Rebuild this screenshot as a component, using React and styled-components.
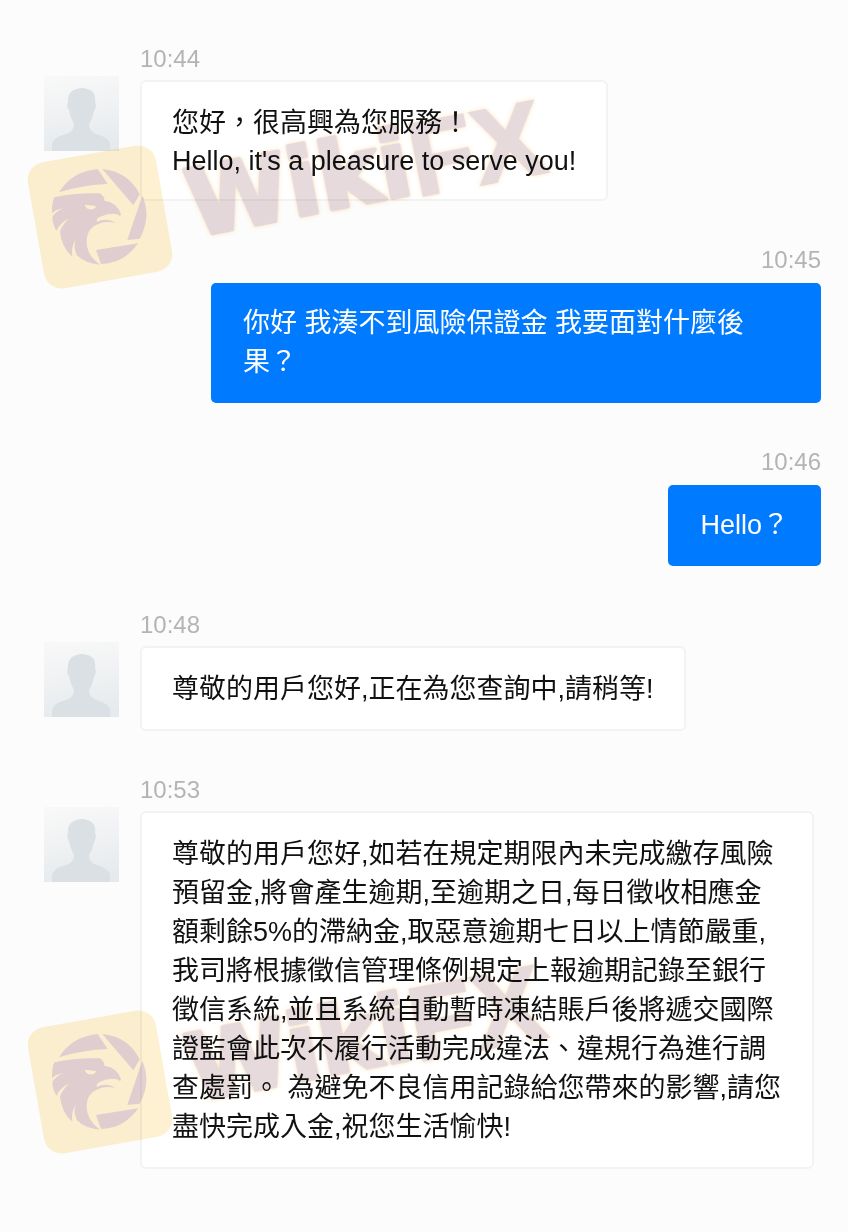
import React from "react";
import styled, { createGlobalStyle } from "styled-components";

const GlobalStyle = createGlobalStyle`
  * {
    box-sizing: border-box;
  }
  body {
    margin: 0;
    background: #fcfcfc;
    font-family: "Liberation Sans", "Noto Sans CJK TC", sans-serif;
  }
`;

const Page = styled.main`
  position: relative;
  min-height: 100vh;
  padding: 44px 27px 64px 44px;
`;

const Thread = styled.ol`
  display: flex;
  flex-direction: column;
  gap: 44px;
  margin: 0;
  padding: 0;
  list-style: none;
`;

const Row = styled.li`
  display: flex;
  align-items: flex-start;
  gap: 21px;
  justify-content: ${({ $mine }) => ($mine ? "flex-end" : "flex-start")};
  padding-left: ${({ $mine }) => ($mine ? "167px" : "0")};
  padding-right: ${({ $mine }) => ($mine ? "0" : "7px")};
`;

const Avatar = styled.svg`
  flex: none;
  width: 75px;
  height: 75px;
  margin-top: 32px;
`;

const Content = styled.div`
  display: flex;
  flex-direction: column;
  align-items: ${({ $mine }) => ($mine ? "flex-end" : "flex-start")};
  gap: ${({ $mine }) => ($mine ? "8px" : "6px")};
  min-width: 0;
`;

const Time = styled.time`
  font-size: 24px;
  line-height: 30px;
  color: #b4b4b4;
`;

const Bubble = styled.div`
  padding: 22px 30px 20px;
  border: 2px solid #f3f3f3;
  border-radius: 6px;
  background: #fff;
  color: #111;
`;

const MyBubble = styled(Bubble)`
  padding: 21px 32px;
  border: 0;
  border-radius: 5px;
  background: #007aff;
  color: #fff;
`;

const Line = styled.p`
  margin: 0;
  font-size: 27px;
  line-height: ${({ lang }) => (lang === "en" ? "36px" : "39px")};
`;

const Mark = styled.svg`
  position: absolute;
  left: 0;
  top: ${({ $top }) => $top};
  width: 600px;
  height: 240px;
  overflow: visible;
  pointer-events: none;
  mix-blend-mode: multiply;
`;

const Wordmark = styled.g`
  fill: #e6dadc;
  stroke: #e6dadc;
  filter: drop-shadow(0 0 2px #ffe6bd);
`;

const Rounded = styled.text`
  font: 700 92px "DejaVu Sans", sans-serif;
  stroke-width: 4px;
  stroke-linejoin: round;
`;

const Sharp = styled.text`
  font: 700 106px "Liberation Sans", sans-serif;
  stroke-width: 2px;
`;

const messages = [
  {
    time: "10:44",
    lines: [
      { text: "您好，很高興為您服務！" },
      { text: "Hello, it's a pleasure to serve you!", lang: "en" },
    ],
  },
  {
    time: "10:45",
    mine: true,
    lines: [{ text: "你好 我湊不到風險保證金 我要面對什麼後果？" }],
  },
  { time: "10:46", mine: true, lines: [{ text: "Hello？" }] },
  { time: "10:48", lines: [{ text: "尊敬的用戶您好,正在為您查詢中,請稍等!" }] },
  {
    time: "10:53",
    lines: [
      {
        text: "尊敬的用戶您好,如若在規定期限內未完成繳存風險預留金,將會產生逾期,至逾期之日,每日徵收相應金額剩餘5%的滯納金,取惡意逾期七日以上情節嚴重,我司將根據徵信管理條例規定上報逾期記錄至銀行徵信系統,並且系統自動暫時凍結賬戶後將遞交國際證監會此次不履行活動完成違法、違規行為進行調查處罰。 為避免不良信用記錄給您帶來的影響,請您盡快完成入金,祝您生活愉快!",
      },
    ],
  },
];

const AgentAvatar = () => (
  <Avatar viewBox="0 0 75 75" role="img" aria-label="客服">
    <defs>
      <linearGradient id="avatarBg" x1="0.3" y1="0" x2="0.5" y2="1">
        <stop offset="0" stopColor="#f8f8f8" />
        <stop offset="1" stopColor="#e6eaed" />
      </linearGradient>
    </defs>
    <rect width="75" height="75" fill="url(#avatarBg)" />
    <path
      d="M8 75V68Q10 62 16 60L25 57Q30 54 30 48Q26 41 25 34Q22 30 24 26Q23 13 38 12Q53 13 51 26Q53 30 50 35Q49 42 45 48Q45 54 50 57L58 60Q65 63 66 68V75Z"
      fill="#dae0e3"
    />
  </Avatar>
);

const Watermark = ({ top }) => (
  <Mark $top={top} viewBox="0 0 600 240" aria-hidden="true">
    <rect
      x="35"
      y="63"
      width="130"
      height="128"
      rx="18"
      fill="#fdf1d2"
      transform="rotate(-10 100 127)"
    />
    {/* eagle head inside the shutter ring */}
    <g fill="#e2d0d2" transform="translate(45 70) scale(0.3333)">
      <path d="M42 97Q80 35 158 27L188 72Q115 74 42 97Z" />
      <path d="M172 27Q250 35 284 103L265 136Z" />
      <path d="M292 107Q320 170 284 236L247 240Z" />
      <path d="M280 250Q235 312 168 312L153 270Z" />
      <path d="M28 112Q90 98 165 100Q180 112 178 122Q218 128 228 163Q226 172 220 164Q195 156 164 171Q152 177 156 185Q185 172 212 188Q178 182 160 192Q125 205 125 245Q125 285 165 314Q120 310 96 286Q84 262 92 240Q78 258 82 290Q50 262 45 215Q50 198 72 175Q45 190 34 212Q22 190 22 172Q30 155 55 145Q32 148 21 160Q20 130 28 112Z" />
      <path d="M119 134L153 138Q150 150 135 148Q122 146 119 134Z" fill="#fdf1d2" />
    </g>
    <Wordmark transform="translate(198 146) rotate(-11)">
      <Rounded x="-4" y="0">
        Wiki
      </Rounded>
      <Sharp x="222" y="4">
        FX
      </Sharp>
    </Wordmark>
  </Mark>
);

const Message = ({ time, mine, lines }) => {
  const Box = mine ? MyBubble : Bubble;
  return (
    <Row $mine={mine}>
      {!mine && <AgentAvatar />}
      <Content $mine={mine}>
        <Time>{time}</Time>
        <Box>
          {lines.map(({ text, lang }) => (
            <Line key={text} lang={lang || "zh-Hant"}>
              {text}
            </Line>
          ))}
        </Box>
      </Content>
    </Row>
  );
};

const App = () => {
  return (
    <>
      <GlobalStyle />
      <Page>
        <Thread>
          {messages.map((message) => (
            <Message key={message.time} {...message} />
          ))}
        </Thread>
        <Watermark top="90px" />
        <Watermark top="955px" />
      </Page>
    </>
  );
};

export default App;
